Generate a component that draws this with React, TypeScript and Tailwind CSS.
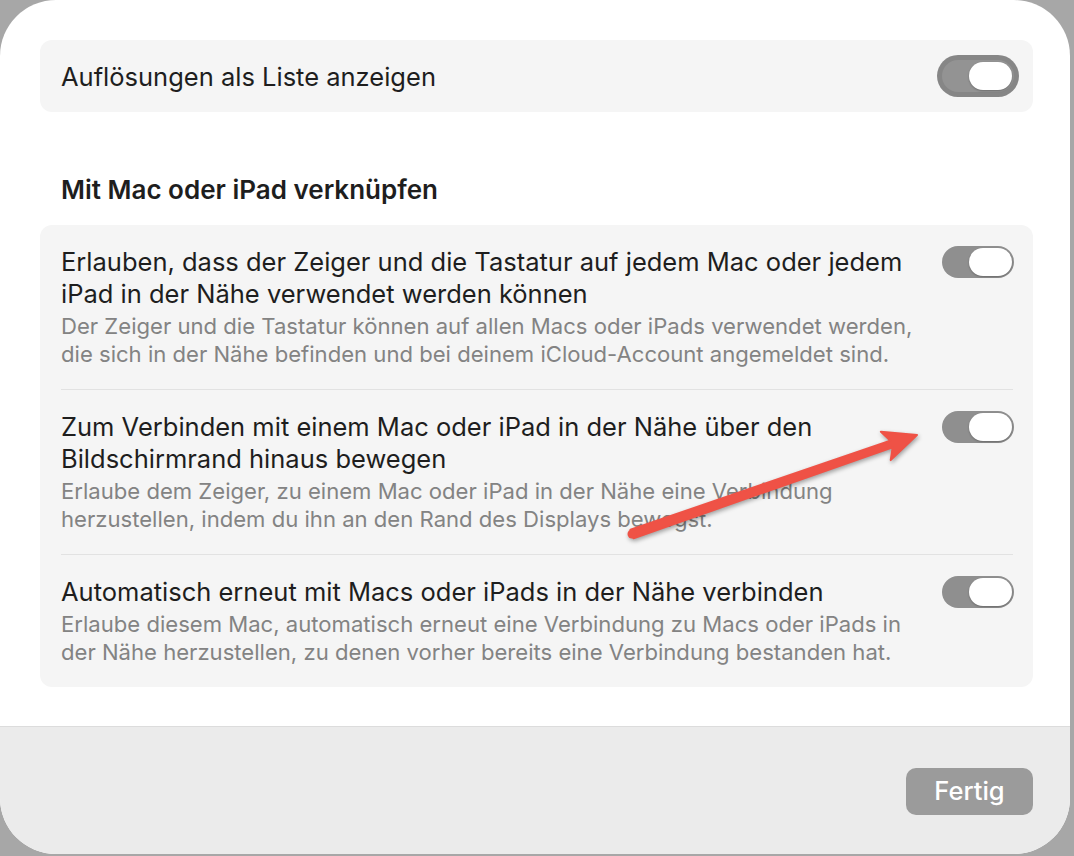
import React from 'react';

const Toggle = ({ focused = false }: { focused?: boolean }) => (
  <div
    className={`flex h-[32px] w-[72px] shrink-0 items-center justify-end rounded-full p-[2px] ${
      focused ? 'bg-[#939393] ring-[5px] ring-[#868686]' : 'bg-[#8f8f8f]'
    }`}
  >
    <div className="h-[28px] w-[43px] rounded-full bg-white shadow-[0_1px_2px_rgba(0,0,0,0.25)]" />
  </div>
);

interface RowProps {
  title: string[];
  desc: string[];
}

const SettingRow = ({ title, desc }: RowProps) => (
  <div className="flex items-start justify-between pb-[21px] pl-[21px] pr-[19px] pt-[21px]">
    <div>
      <div className="text-[25.5px] leading-[32px] text-[#1e1e1e]">
        {title.map(line => (
          <div key={line} className="whitespace-nowrap">{line}</div>
        ))}
      </div>
      <div className="mt-[2px] text-[22.1px] leading-[28px] text-[#838383]">
        {desc.map(line => (
          <div key={line} className="whitespace-nowrap">{line}</div>
        ))}
      </div>
    </div>
    <Toggle />
  </div>
);

const rows: RowProps[] = [
  {
    title: [
      'Erlauben, dass der Zeiger und die Tastatur auf jedem Mac oder jedem',
      'iPad in der Nähe verwendet werden können',
    ],
    desc: [
      'Der Zeiger und die Tastatur können auf allen Macs oder iPads verwendet werden,',
      'die sich in der Nähe befinden und bei deinem iCloud-Account angemeldet sind.',
    ],
  },
  {
    title: [
      'Zum Verbinden mit einem Mac oder iPad in der Nähe über den',
      'Bildschirmrand hinaus bewegen',
    ],
    desc: [
      'Erlaube dem Zeiger, zu einem Mac oder iPad in der Nähe eine Verbindung',
      'herzustellen, indem du ihn an den Rand des Displays bewegst.',
    ],
  },
  {
    title: ['Automatisch erneut mit Macs oder iPads in der Nähe verbinden'],
    desc: [
      'Erlaube diesem Mac, automatisch erneut eine Verbindung zu Macs oder iPads in',
      'der Nähe herzustellen, zu denen vorher bereits eine Verbindung bestanden hat.',
    ],
  },
];

const App = () => {
  return (
    <div
      className="relative h-[856px] w-[1074px] overflow-hidden bg-[#a7a7a7]"
      style={{ fontFamily: 'Inter, "Liberation Sans", sans-serif' }}
    >
      <div className="flex h-[854px] w-[1070px] flex-col overflow-hidden rounded-[56px] bg-white">
        <div className="flex-1 pl-[40px] pr-[37px] pt-[40px]">
          <div className="flex h-[72px] items-center justify-between rounded-[12px] bg-[#f5f5f5] pl-[21px] pr-[19px]">
            <span className="mt-[3px] text-[25.5px] text-[#1e1e1e]">Auflösungen als Liste anzeigen</span>
            <Toggle focused />
          </div>

          <h2 className="mb-[19px] mt-[62px] pl-[21px] text-[26px] font-semibold leading-[32px] text-[#1e1e1e]">
            Mit Mac oder iPad verknüpfen
          </h2>

          <div className="rounded-[12px] bg-[#f5f5f5]">
            {rows.map((row, i) => (
              <div key={i}>
                {i > 0 && <div className="ml-[21px] mr-[20px] h-px bg-[#e2e2e2]" />}
                <SettingRow {...row} />
              </div>
            ))}
          </div>
        </div>

        <div className="flex h-[128px] items-start justify-end border-t border-[#dcdcdc] bg-[#ebebeb] pr-[37px] pt-[41px]">
          <button className="flex h-[47px] w-[127px] items-center justify-center rounded-[10px] bg-[#9b9b9b] text-[25.5px] font-medium text-white">
            Fertig
          </button>
        </div>
      </div>

      {/* annotation arrow */}
      <svg
        className="pointer-events-none absolute left-0 top-0"
        width="1074"
        height="856"
        viewBox="0 0 1074 856"
        style={{ filter: 'drop-shadow(1px 2px 2px rgba(0,0,0,0.35))' }}
      >
        <polygon
          points="630.5,529.8 890.3,440.6 880.9,431.7 917,435 890.7,460.1 892.7,447.2 633.5,538.2"
          fill="#ef5246"
          stroke="#ef5246"
          strokeWidth="2"
          strokeLinejoin="round"
        />
        <circle cx="632" cy="534" r="4.5" fill="#ef5246" />
      </svg>
    </div>
  );
};

export default App;
